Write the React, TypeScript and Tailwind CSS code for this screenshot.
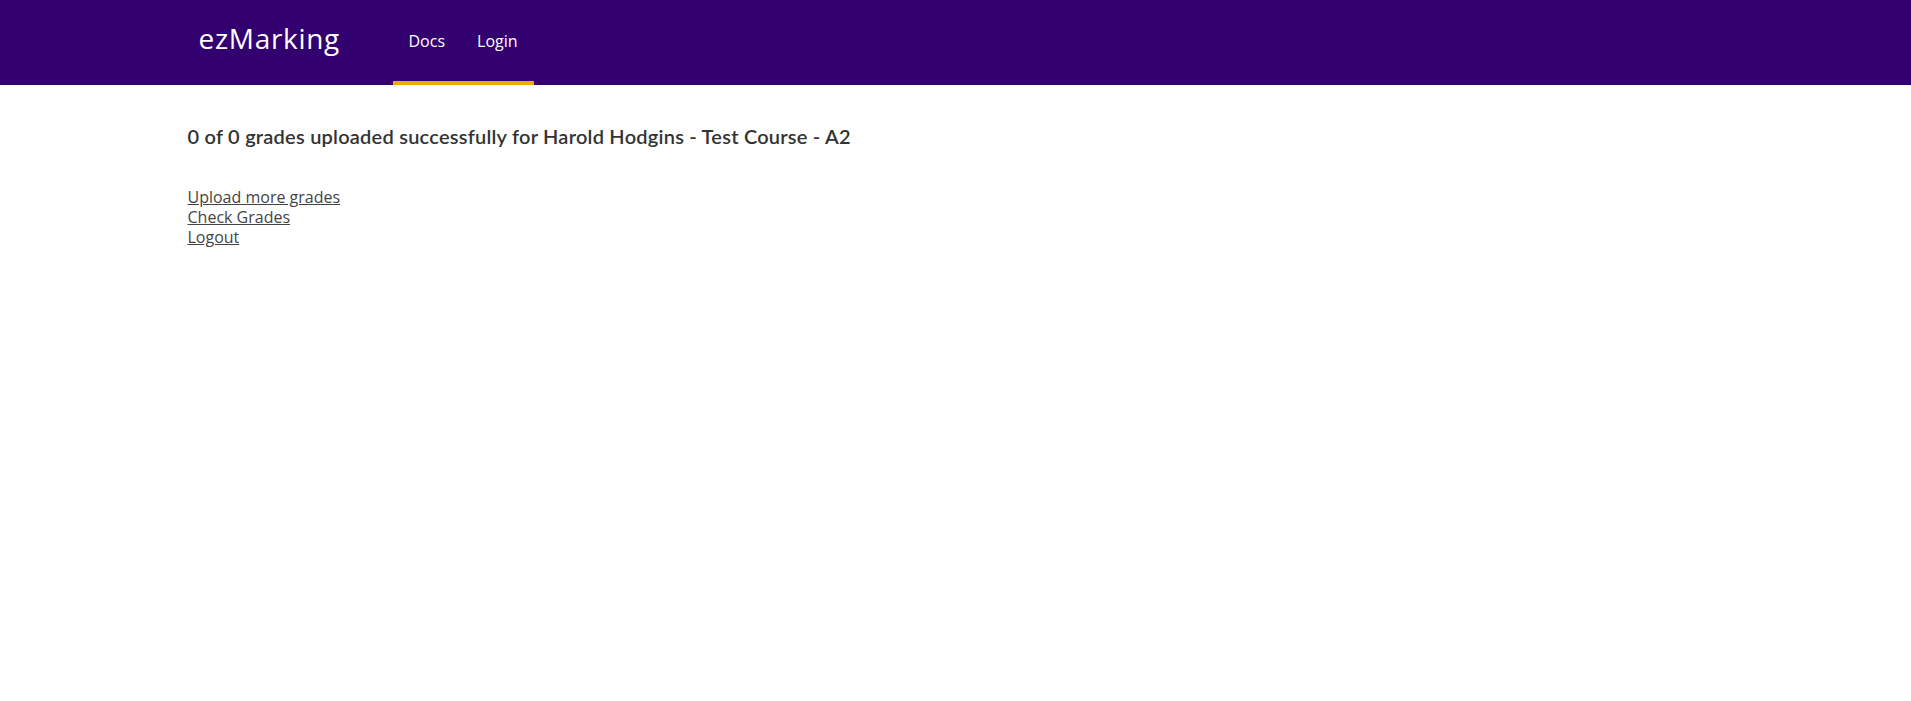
export default function App() {
  return (
    <div className="min-h-screen bg-white font-['Open_Sans',sans-serif]">
      <header className="h-[85px] bg-[#33006f]">
        <div className="mx-auto flex h-full w-full max-w-[1536px] items-stretch">
          <div className="flex w-[205px] items-center pb-[9px] pl-[11px]">
            <span className="text-[28px] leading-none tracking-[0.7px] text-white">ezMarking</span>
          </div>
          <ul className="flex items-stretch border-b-4 border-[#f2a900]">
            <li className="flex items-center px-4">
              <a href="#" className="text-[16px] text-white">Docs</a>
            </li>
            <li className="flex items-center px-4">
              <a href="#" className="text-[16px] text-white">Login</a>
            </li>
          </ul>
        </div>
      </header>
      <main className="mx-auto w-full max-w-[1536px]">
        <h2 className="mt-[37px] font-['Lato',sans-serif] text-[20px] leading-[28px] font-semibold tracking-[0.23px] text-[#333]">
          0 of 0 grades uploaded successfully for Harold Hodgins - Test Course - A2
        </h2>
        <div className="mt-[37px] flex flex-col text-[16px] leading-[20px] text-[#444]">
          <a href="#" className="self-start underline">Upload more grades</a>
          <a href="#" className="self-start underline">Check Grades</a>
          <a href="#" className="self-start underline">Logout</a>
        </div>
      </main>
    </div>
  );
}
